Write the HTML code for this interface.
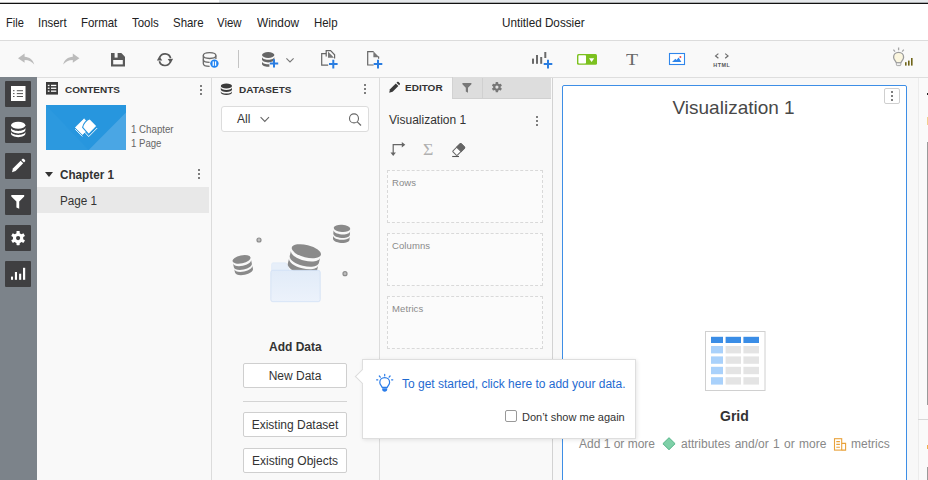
<!DOCTYPE html>
<html lang="en">
<head>
<meta charset="utf-8">
<title>Untitled Dossier</title>
<style>
*{box-sizing:border-box;margin:0;padding:0}
html,body{width:928px;height:480px;overflow:hidden;background:#fff}
body{font-family:"Liberation Sans",Arial,sans-serif;color:#333;position:relative}
.abs{position:absolute}
.t{position:absolute;white-space:nowrap;line-height:1}
svg{position:absolute;overflow:visible}
#topline{left:0;top:0;width:928px;height:4px;background:#fff}
#topline i{position:absolute;left:0;top:3px;width:928px;height:1px;background:#111;box-shadow:0 -1px 0 rgba(0,0,0,.25)}
#topline b{position:absolute;left:219px;top:0;width:709px;height:3px;background:#e5e8eb}
#menubar{left:0;top:4px;width:928px;height:36px;background:#fff}
.menu{font-size:13px;color:#222;top:16px;transform-origin:0 0;transform:scaleX(.88)}
#menuline{left:0;top:40px;width:928px;height:1px;background:#dcdcdc}
#toolbar{left:0;top:41px;width:928px;height:36px;background:#f9f9f9}
#toolline{left:0;top:77px;width:928px;height:1px;background:#dedede}
#sidebar{left:0;top:77px;width:37px;height:403px;background:#7c838a}
.sb{position:absolute;left:5px;width:26px;height:26px;background:#3f3f41;border-radius:1px}
#contents{left:37px;top:78px;width:174px;height:402px;background:#f9f9f9}
#div1{left:211px;top:78px;width:1px;height:402px;background:#dcdcdc}
#datasets{left:212px;top:78px;width:167px;height:402px;background:#f9f9f9}
#div2{left:379px;top:78px;width:1px;height:402px;background:#dcdcdc}
#editor{left:380px;top:78px;width:172px;height:402px;background:#f9f9f9}
#div3{left:552px;top:78px;width:1px;height:402px;background:#d2d2d2}
#canvasbg{left:553px;top:78px;width:375px;height:402px;background:#f8f8f8}
.hdr{font-size:10px;font-weight:bold;color:#333;transform:scaleY(.875);transform-origin:0 8.3px}
.kebab{position:absolute;width:2px;height:2px;background:#555;border-radius:1px;box-shadow:0 4px 0 #555,0 8px 0 #555}
.btn{position:absolute;left:243px;width:104px;height:25px;background:#fff;border:1px solid #cfcfcf;border-radius:2px;font-size:12px;color:#333;text-align:center;line-height:25px}
.drop{position:absolute;left:387px;width:156px;height:53px;border:1px dashed #d9d9d9;background:#fbfbfb}
.drop span{position:absolute;left:4px;top:7px;font-size:9.5px;letter-spacing:.1px;color:#8a8a8a;line-height:1}
</style>
</head>
<body>
<div class="abs" id="menubar"></div>
<div class="abs" id="topline"><b></b><i></i></div>
<span class="t menu" style="left:5.5px;transform:scaleX(.85)">File</span>
<span class="t menu" style="left:37.5px">Insert</span>
<span class="t menu" style="left:81px">Format</span>
<span class="t menu" style="left:132px">Tools</span>
<span class="t menu" style="left:173px">Share</span>
<span class="t menu" style="left:217px">View</span>
<span class="t menu" style="left:256.5px;transform:scaleX(.91)">Window</span>
<span class="t menu" style="left:314px">Help</span>
<span class="t menu" style="left:502px;transform:scaleX(.9)">Untitled Dossier</span>
<div class="abs" id="menuline"></div>
<div class="abs" id="toolbar"></div>
<div class="abs" id="toolline"></div>

<!-- TOOLBAR ICONS -->
<div id="tbicons">
<!-- undo -->
<svg style="left:0;top:0" width="928" height="80" viewBox="0 0 928 80">
<g fill="#bcbcbc">
<path d="M18 58.2 L24.6 53.6 V56.8 C29.5 57 33 59.8 34.2 64.6 C32 61.4 29 60 24.6 59.9 V62.8 Z"/>
<path d="M79.4 58.2 L72.8 53.6 V56.8 C67.9 57 64.4 59.8 63.2 64.6 C65.4 61.4 68.4 60 72.8 59.9 V62.8 Z"/>
</g>
<!-- save -->
<g>
<path d="M111 53 H121.3 L125 56.7 V66.4 H111 Z" fill="#595959"/>
<rect x="113.2" y="60" width="9.6" height="4.4" fill="#f9f9f9"/>
<rect x="114.6" y="53" width="3" height="4.6" fill="#f9f9f9"/>
</g>
<!-- refresh -->
<g fill="none" stroke="#595959" stroke-width="1.7">
<path d="M159.6 57.6 A5.8 5.8 0 0 1 170.6 58.2"/>
<path d="M170.4 61.8 A5.8 5.8 0 0 1 159.4 61.2"/>
</g>
<path d="M156.9 60.6 L159.3 56.2 L162.3 60.4 Z M173.1 58.8 L170.7 63.2 L167.7 59 Z" fill="#595959"/>
<!-- db pause -->
<g fill="none" stroke="#6a6a6a" stroke-width="1.3">
<ellipse cx="209.6" cy="55.6" rx="6.3" ry="2.9"/>
<path d="M203.3 55.6 V63.4 C203.3 65 206 66.3 209.6 66.3 M215.9 55.6 V59"/>
<path d="M203.3 59.4 C203.3 61 206 62.3 209.6 62.3"/>
</g>
<circle cx="214.4" cy="63.6" r="4.2" fill="#1f83f2"/>
<rect x="212.6" y="61.4" width="1.3" height="4.4" fill="#fff"/><rect x="214.9" y="61.4" width="1.3" height="4.4" fill="#fff"/>
<!-- separator -->
<rect x="238" y="50" width="1" height="18" fill="#c4c4c4"/>
<!-- db plus -->
<g fill="#666">
<ellipse cx="268.2" cy="55" rx="6.2" ry="2.9"/>
<path d="M262 57 C262 58.6 264.8 59.8 268.2 59.8 C271.6 59.8 274.4 58.6 274.4 57 V59.6 C274.4 61.2 271.6 62.4 268.2 62.4 C264.8 62.4 262 61.2 262 59.6 Z"/>
<path d="M262 61.4 C262 63 264.8 64.2 268.2 64.2 L269.4 64.15 V66.7 L268.2 66.8 C264.8 66.8 262 65.6 262 64 Z"/>
</g>
<path d="M274 59.2 V67.6 M269.8 63.4 H278.2" stroke="#2a7de1" stroke-width="2" fill="none"/>
<path d="M286.4 58.4 L290 62 L293.6 58.4" stroke="#777" stroke-width="1.1" fill="none"/>
<!-- copy plus -->
<g fill="none" stroke="#666" stroke-width="1.2">
<path d="M326.2 53.6 H321.7 V65.2 H328.2"/>
<path d="M326.2 56.5 V50.7 H330.6 L334.6 54.8 V58.6"/>
</g>
<path d="M328 51.4 L334 57.8 H328 Z" fill="#777"/>
<path d="M333.3 59.8 V68.4 M329 64.1 H337.6" stroke="#2a7de1" stroke-width="2" fill="none"/>
<!-- page plus -->
<path d="M373.6 51.7 H367.7 V65 H373.6 M378.6 56.6 V58.8" fill="none" stroke="#666" stroke-width="1.2"/>
<path d="M373.4 51.2 L379.2 57.2 H373.4 Z" fill="#777"/>
<path d="M378 59.8 V68.4 M373.7 64.1 H382.3" stroke="#2a7de1" stroke-width="2" fill="none"/>
<!-- chart plus -->
<g fill="#6a6a6a">
<rect x="532" y="58.6" width="2" height="5.2"/><rect x="536" y="55" width="2" height="8.8"/><rect x="540.2" y="57" width="2" height="6.8"/><rect x="544.3" y="52" width="2" height="6"/>
</g>
<path d="M548 59.8 V68.4 M543.7 64.1 H552.3" stroke="#2a7de1" stroke-width="2" fill="none"/>
<!-- selector -->
<rect x="577" y="54" width="20" height="10.8" rx="1.5" fill="#7cc11f"/>
<rect x="578.4" y="55.3" width="7.6" height="8.2" rx="0.8" fill="#fff"/>
<path d="M589 58.3 H594.2 L591.6 61.9 Z" fill="#fff"/>
<!-- image -->
<rect x="669.5" y="53.5" width="15" height="11" fill="#fff" stroke="#2f86eb" stroke-width="1.1"/>
<path d="M672 62 L675.4 58.8 L676.6 60 L678.6 57.6 L681.4 62 Z" fill="#2f86eb"/>
<circle cx="680.4" cy="57" r="1" fill="#f0504a"/>
<!-- html -->
<path d="M718.4 53.6 L715.6 55.9 L718.4 58.2 M725.2 53.6 L728 55.9 L725.2 58.2" fill="none" stroke="#6a6a6a" stroke-width="1.2"/>
<text x="721.8" y="66.8" font-family="Liberation Sans, Arial, sans-serif" font-size="5.4" font-weight="bold" fill="#555" text-anchor="middle" letter-spacing="0.5">HTML</text>
<!-- bulb right -->
<g>
<path d="M898.6 47.4 V50.2 M893.4 49.6 L895 51.6 M903.8 49.6 L902.2 51.6" stroke="#a6a6a6" stroke-width="1.3" fill="none"/>
<path d="M898.6 52.4 C895.6 52.4 893.6 54.6 893.6 57.2 C893.6 59.6 895.6 60.8 896.2 62.6 H901 C901.6 60.8 903.6 59.6 903.6 57.2 C903.6 54.6 901.6 52.4 898.6 52.4 Z" fill="#fbf6df" stroke="#9c9c9c" stroke-width="1.3"/>
<rect x="896.4" y="62.8" width="4.4" height="2.8" rx="0.8" fill="#f1f1f1" stroke="#9e9e9e" stroke-width="0.9"/>
<rect x="905" y="62.2" width="1.6" height="3.4" fill="#6f6418"/><rect x="908" y="60.6" width="1.6" height="5" fill="#6f6418"/><rect x="911" y="58" width="1.6" height="7.6" fill="#6f6418"/>
</g>
</svg>
<span class="t" style="left:626px;top:52px;font-family:'Liberation Serif',serif;font-size:16.5px;color:#6a6a6a;transform:scaleX(1.2);transform-origin:0 0">T</span>
</div>

<!-- SIDEBAR -->
<div class="abs" id="sidebar">
  <div class="sb" style="top:4px"></div>
  <div class="sb" style="top:40px"></div>
  <div class="sb" style="top:76px"></div>
  <div class="sb" style="top:112px"></div>
  <div class="sb" style="top:148px"></div>
  <div class="sb" style="top:184px"></div>
</div>
<div id="sbicons">
<svg style="left:0;top:0" width="60" height="300" viewBox="0 0 60 300">
<!-- contents -->
<rect x="11" y="86" width="14.5" height="15" fill="#fff"/>
<g fill="#555">
<rect x="13" y="90.2" width="1.5" height="1"/><rect x="16.8" y="90.2" width="6.2" height="1"/>
<rect x="13" y="93.1" width="1.5" height="1"/><rect x="16.8" y="93.1" width="6.2" height="1"/>
<rect x="13" y="96" width="1.5" height="1"/><rect x="16.8" y="96" width="6.2" height="1"/>
</g>
<!-- db -->
<g fill="#fff">
<ellipse cx="18.2" cy="125.3" rx="7.2" ry="3.5"/>
<path d="M11 127.6 C11 129.6 14.2 131 18.2 131 C22.2 131 25.4 129.6 25.4 127.6 V129.8 C25.4 131.8 22.2 133.4 18.2 133.4 C14.2 133.4 11 131.8 11 129.8 Z"/>
<path d="M11 131.6 C11 133.6 14.2 135 18.2 135 C22.2 135 25.4 133.6 25.4 131.6 V133.6 C25.4 135.6 22.2 137.2 18.2 137.2 C14.2 137.2 11 135.6 11 133.6 Z"/>
</g>
<!-- pencil -->
<g fill="#fff">
<path d="M12 172.2 L12.9 168.4 L20.6 160.7 L23.2 163.3 L15.6 171 Z"/>
<path d="M21.4 159.9 L22.3 159 C22.8 158.5 23.5 158.5 24 159 L24.9 159.9 C25.4 160.4 25.4 161.1 24.9 161.6 L24 162.5 Z"/>
</g>
<!-- funnel -->
<path d="M11.3 195.1 H24.2 V196.6 L19.2 201.6 V208.8 L16.4 207.4 V201.6 L11.3 196.6 Z" fill="#fff"/>
<!-- gear -->
<g transform="translate(18.1 238.1)">
<g fill="#fff">
<circle r="5.2"/>
<rect x="-1.6" y="-7.1" width="3.2" height="14.2" rx="0.6"/>
<rect x="-1.6" y="-7.1" width="3.2" height="14.2" rx="0.6" transform="rotate(60)"/>
<rect x="-1.6" y="-7.1" width="3.2" height="14.2" rx="0.6" transform="rotate(120)"/>
</g>
<circle r="2.1" fill="#3f3f41"/>
</g>
<!-- bars -->
<g fill="#fff">
<rect x="11" y="276.6" width="2" height="3.2"/><rect x="14.9" y="272" width="2.1" height="7.8"/><rect x="19.1" y="273.7" width="2.1" height="6.1"/><rect x="23" y="267.8" width="2.2" height="12"/>
</g>
</svg>
</div>

<!-- CONTENTS PANEL -->
<div class="abs" id="contents"></div>
<svg style="left:46px;top:82px" width="12" height="13" viewBox="0 0 12 13"><rect width="12" height="12.6" fill="#3a3a3a"/>
<g fill="#fff"><rect x="1.8" y="2.8" width="1.7" height="1.3"/><rect x="5" y="2.8" width="5.3" height="1.3"/><rect x="1.8" y="5.6" width="1.7" height="1.3"/><rect x="5" y="5.6" width="5.3" height="1.3"/><rect x="1.8" y="8.5" width="1.7" height="1.3"/><rect x="5" y="8.5" width="5.3" height="1.3"/></g></svg>
<span class="t hdr" style="left:65px;top:85px">CONTENTS</span>
<div class="kebab" style="left:200px;top:85px"></div>
<div class="abs" id="thumb" style="left:46px;top:105px;width:80px;height:45px;background:#2796de;overflow:hidden">
<svg style="left:0;top:0" width="80" height="45" viewBox="0 0 80 45">
<path d="M0 0 L42.7 45 H0 Z" fill="#2c99df"/>
<path d="M42.7 45 L80 7.6 V45 Z" fill="#4aa6e4"/>
<!-- left page -->
<path d="M38.2 13.8 L29.4 22.4 L36.4 29.6 L44 22 Z" fill="#fff" stroke="#fff" stroke-width="0.8" stroke-linejoin="round"/>
<path d="M29.2 24.2 L36.3 31.4" stroke="#fff" stroke-width="0.9" fill="none"/>
<!-- right page -->
<path d="M43.9 13.8 L51 21 L42.7 29.4 L36.6 22.4 C37.6 18.4 40.4 15.2 43.9 13.8 Z" fill="#fff" stroke="#2796de" stroke-width="1.1" stroke-linejoin="round"/>
<path d="M36.2 24.4 L42.7 31.6 L51.2 23" stroke="#fff" stroke-width="0.9" fill="none"/>
</svg></div>
<span class="t" style="left:131px;top:125px;font-size:10px;color:#666;transform-origin:0 0;transform:scaleX(.97)">1 Chapter</span>
<span class="t" style="left:131px;top:139px;font-size:10px;color:#666;transform-origin:0 0;transform:scaleX(.96)">1 Page</span>
<div class="abs" style="left:45px;top:172px;width:0;height:0;border-left:4px solid transparent;border-right:4px solid transparent;border-top:5px solid #333"></div>
<span class="t" style="left:60px;top:169px;font-size:12px;font-weight:bold;color:#333;transform-origin:0 0;transform:scaleX(.975)">Chapter 1</span>
<div class="kebab" style="left:198px;top:169px"></div>
<div class="abs" style="left:37px;top:187px;width:172px;height:26px;background:#e8e8e8"></div>
<span class="t" style="left:60px;top:195px;font-size:12px;color:#333;transform-origin:0 0;transform:scaleX(.975)">Page 1</span>

<!-- DATASETS PANEL -->
<div class="abs" id="div1"></div>
<div class="abs" id="datasets"></div>
<span class="t hdr" style="left:239px;top:85px">DATASETS</span>
<div class="kebab" style="left:364px;top:84px"></div>
<div class="abs" style="left:221px;top:106px;width:148px;height:26px;background:#fff;border:1px solid #dcdcdc;border-radius:3px"></div>
<span class="t" style="left:237px;top:113px;font-size:12px;color:#333">All</span>
<span class="t" style="left:269px;top:341px;font-size:12px;font-weight:bold;color:#333">Add Data</span>
<div class="btn" style="top:363px">New Data</div>
<div class="abs" style="left:243px;top:401px;width:104px;height:1px;background:#d4d4d4"></div>
<div class="btn" style="top:412px">Existing Dataset</div>
<div class="btn" style="top:448px">Existing Objects</div>
<div id="dsart">
<svg style="left:212px;top:78px" width="168" height="260" viewBox="212 78 168 260">
<!-- header db icon -->
<g fill="#3a3a3a">
<ellipse cx="226.4" cy="85.9" rx="5.6" ry="2.5"/>
<path d="M220.8 87.6 C220.8 89 223.3 90 226.4 90 C229.5 90 232 89 232 87.6 V89.6 C232 91 229.5 92.1 226.4 92.1 C223.3 92.1 220.8 91 220.8 89.6 Z"/>
<path d="M220.8 91.2 C220.8 92.6 223.3 93.6 226.4 93.6 C229.5 93.6 232 92.6 232 91.2 V92.6 C232 94 229.5 95 226.4 95 C223.3 95 220.8 94 220.8 92.6 Z"/>
</g>
<!-- chevron + search -->
<path d="M260.6 117.2 L264.8 121.4 L269 117.2" fill="none" stroke="#666" stroke-width="1.1"/>
<circle cx="354" cy="118.4" r="4.5" fill="none" stroke="#666" stroke-width="1.1"/>
<path d="M357.3 121.8 L361 125.5" stroke="#666" stroke-width="1.2"/>
<!-- illustration -->
<circle cx="259" cy="240" r="2" fill="#bdbdbd" stroke="#8c8c8c" stroke-width="1.2"/>
<circle cx="345" cy="273.7" r="2" fill="#bdbdbd" stroke="#8c8c8c" stroke-width="1.2"/>
<!-- top-right db -->
<g transform="translate(341.6 234) rotate(4)">
<g fill="#8a8a8a">
<ellipse cx="0" cy="-5.6" rx="8.3" ry="3.6"/>
<path d="M-8.3 -3.4 C-8.3 -1.2 -4.6 0.4 0 0.4 C4.6 0.4 8.3 -1.2 8.3 -3.4 V0.2 C8.3 2.4 4.6 4 0 4 C-4.6 4 -8.3 2.4 -8.3 0.2 Z"/>
<path d="M-8.3 2 C-8.3 4.2 -4.6 5.8 0 5.8 C4.6 5.8 8.3 4.2 8.3 2 V5.2 C8.3 7.4 4.6 9 0 9 C-4.6 9 -8.3 7.4 -8.3 5.2 Z"/>
</g></g>
<!-- left db -->
<g transform="translate(242.8 265.2) rotate(-12)">
<g fill="#8a8a8a">
<ellipse cx="0" cy="-6" rx="9.2" ry="4"/>
<path d="M-9.2 -3.6 C-9.2 -1.2 -5 0.6 0 0.6 C5 0.6 9.2 -1.2 9.2 -3.6 V0.2 C9.2 2.6 5 4.4 0 4.4 C-5 4.4 -9.2 2.6 -9.2 0.2 Z"/>
<path d="M-9.2 2.2 C-9.2 4.6 -5 6.4 0 6.4 C5 6.4 9.2 4.6 9.2 2.2 V5.6 C9.2 8 5 9.8 0 9.8 C-5 9.8 -9.2 8 -9.2 5.6 Z"/>
</g></g>
<!-- folder back tab -->
<path d="M271.6 264.4 Q271.6 262.8 273.2 262.8 H285 Q286.4 262.8 287 264 L289.2 270.4 H271.6 Z" fill="#e7eff9" stroke="#dbe7f6" stroke-width="0.6"/>
<!-- center db -->
<g transform="translate(304.8 257.4) rotate(14)">
<g fill="#8a8a8a">
<ellipse cx="0" cy="-6.4" rx="15" ry="6.2"/>
<path d="M-15 -3.4 C-15 0.4 -8.2 3.2 0 3.2 C8.2 3.2 15 0.4 15 -3.4 V2 C15 5.8 8.2 8.6 0 8.6 C-8.2 8.6 -15 5.8 -15 2 Z"/>
<path d="M-15 4.6 C-15 8.4 -8.2 11.2 0 11.2 C8.2 11.2 15 8.4 15 4.6 V10 C15 13.8 8.2 16.6 0 16.6 C-8.2 16.6 -15 13.8 -15 10 Z"/>
</g></g>
<!-- folder front -->
<defs><linearGradient id="fg" x1="0" y1="0" x2="0" y2="1"><stop offset="0" stop-color="#e1ebf8"/><stop offset="1" stop-color="#ecf2fb"/></linearGradient></defs><rect x="270.8" y="270.3" width="49.4" height="31.4" rx="2" fill="url(#fg)" stroke="#d0e0f5" stroke-width="0.8"/>
</svg>
</div>

<!-- EDITOR PANEL -->
<div class="abs" id="div2"></div>
<div class="abs" id="editor"></div>
<div class="abs" style="left:452px;top:77px;width:99px;height:22px;background:#dddddd;border-bottom:1px solid #d0d0d0;border-left:1px solid #d2d2d2"></div>
<div class="abs" style="left:482px;top:78px;width:1px;height:20px;background:#d0d0d0"></div>
<span class="t hdr" style="left:405px;top:83px">EDITOR</span>
<span class="t" style="left:389px;top:114px;font-size:12px;color:#333">Visualization 1</span>
<div class="kebab" style="left:536px;top:116px"></div>
<div class="drop" style="top:170px"><span>Rows</span></div>
<div class="drop" style="top:233px"><span>Columns</span></div>
<div class="drop" style="top:296px"><span>Metrics</span></div>
<div id="edicons">
<svg style="left:380px;top:78px" width="175" height="90" viewBox="380 78 175 90">
<!-- pencil -->
<path d="M389.2 92.8 L390 89.2 L395.8 83.4 L398.4 86 L392.6 91.8 Z" fill="#3a3a3a"/>
<path d="M396.5 82.7 L397.2 82 C397.6 81.6 398.2 81.6 398.6 82 L399.8 83.2 C400.2 83.6 400.2 84.2 399.8 84.6 L399.1 85.3 Z" fill="#3a3a3a"/>
<!-- filter -->
<path d="M462.4 83 H471.4 V84.2 L468 87.8 V92.8 L465.8 91.6 V87.8 L462.4 84.2 Z" fill="#777"/>
<!-- gear -->
<g transform="translate(496.9 87.1)">
<g fill="#777"><circle r="3.7"/>
<rect x="-1.25" y="-5.1" width="2.5" height="10.2" rx="0.5"/>
<rect x="-1.25" y="-5.1" width="2.5" height="10.2" rx="0.5" transform="rotate(60)"/>
<rect x="-1.25" y="-5.1" width="2.5" height="10.2" rx="0.5" transform="rotate(120)"/></g>
<circle r="1.6" fill="#e2e2e2"/></g>
<!-- swap -->
<path d="M393.2 153.6 V144.7 H402.6" fill="none" stroke="#666" stroke-width="1.2"/>
<path d="M401.8 141.9 L405.3 144.7 L401.8 147.5 Z M390.5 152.6 L393.2 156.1 L395.9 152.6 Z" fill="#666"/>
<!-- eraser -->
<g transform="translate(458.6 149.6) rotate(-45)">
<rect x="-5.6" y="-3.1" width="11.6" height="6.2" rx="0.8" fill="#fdfdfd" stroke="#666" stroke-width="1"/>
<path d="M0.4 -3.1 H5.2 Q6 -3.1 6 -2.3 V2.3 Q6 3.1 5.2 3.1 H0.4 Z" fill="#666" stroke="#666" stroke-width="1"/>
</g>
<path d="M452.2 156.5 H459" stroke="#555" stroke-width="1.1"/>
</svg>
<span class="t" style="left:423px;top:142px;font-family:'Liberation Serif',serif;font-size:16.5px;color:#b0b0b0;transform-origin:0 0;transform:scaleX(1.08)">Σ</span>
</div>

<!-- CANVAS -->
<div class="abs" id="div3"></div>
<div class="abs" id="canvasbg"></div>
<div class="abs" style="left:918px;top:78px;width:10px;height:402px;background:#fafafa;border-left:1px solid #ececec"></div>
<div class="abs" style="left:918px;top:419px;width:10px;height:1px;background:#d8d8d8"></div>
<div class="abs" style="left:927px;top:142px;width:1px;height:263px;background:#9a9a9a"></div>
<div class="abs" style="left:927px;top:467px;width:1px;height:13px;background:#9a9a9a"></div>
<div class="abs" style="left:927px;top:93px;width:1px;height:2px;background:#222"></div>
<div class="abs" style="left:927px;top:117px;width:1px;height:8px;background:#f3d08f"></div>
<div class="abs" style="left:927px;top:445px;width:1px;height:4px;background:#f2b04a"></div>
<div class="abs" id="viz" style="left:562px;top:85px;width:345px;height:400px;background:#fff;border:1px solid #3d8ee6;border-radius:2px"></div>
<span class="t" style="left:672.5px;top:98px;font-size:19px;color:#484848">Visualization 1</span>
<div class="abs" style="left:884px;top:88px;width:16px;height:16px;background:#fff;border:1px solid #cfcfcf;border-radius:2px"></div>
<div class="kebab" style="left:891px;top:91px"></div>
<div id="gridicon">
<svg style="left:700px;top:325px" width="230" height="135" viewBox="700 325 230 135">
<rect x="705.5" y="331.5" width="59.5" height="59" fill="#fff" stroke="#d0d0d0" stroke-width="1"/>
<g fill="#3a8de6"><rect x="711" y="336.8" width="12" height="6.2"/><rect x="725.6" y="336.8" width="15.4" height="6.2"/><rect x="743.4" y="336.8" width="15.6" height="6.2"/></g>
<g fill="#a9d1fb"><rect x="711" y="346" width="12" height="7.4"/><rect x="711" y="356.4" width="12" height="7.4"/><rect x="711" y="366.8" width="12" height="7.4"/><rect x="711" y="377.2" width="12" height="7.4"/></g>
<g fill="#e4e4e4">
<rect x="725.6" y="346" width="15.4" height="7.4"/><rect x="743.4" y="346" width="15.6" height="7.4"/>
<rect x="725.6" y="356.4" width="15.4" height="7.4"/><rect x="743.4" y="356.4" width="15.6" height="7.4"/>
<rect x="725.6" y="366.8" width="15.4" height="7.4"/><rect x="743.4" y="366.8" width="15.6" height="7.4"/>
<rect x="725.6" y="377.2" width="15.4" height="7.4"/><rect x="743.4" y="377.2" width="15.6" height="7.4"/>
</g>
</svg>
<svg style="left:660px;top:435px" width="190" height="18" viewBox="660 435 190 18">
<path d="M669 437.7 L675.1 443.7 L669 449.7 L662.9 443.7 Z" fill="#7fd0a8" stroke="#52b587" stroke-width="1"/>
<g fill="none" stroke="#e9a23b" stroke-width="1.1">
<rect x="834.5" y="438.7" width="7.2" height="11.4"/>
<path d="M841.7 443.4 H845.6 V450.1 H841.7"/>
<path d="M836.3 441.6 H839.9 M836.3 444.4 H839.9 M836.3 447.2 H839.9"/>
</g>
</svg>
</div>
<span class="t" style="left:720px;top:409px;font-size:14px;font-weight:bold;color:#333">Grid</span>
<span class="t" style="left:579px;top:438px;font-size:12px;color:#888">Add 1 or more</span>
<span class="t" style="left:681px;top:438px;font-size:12px;color:#888;word-spacing:1px">attributes and/or 1 or more</span>
<span class="t" style="left:851px;top:438px;font-size:12px;color:#888">metrics</span>

<!-- TOOLTIP -->
<div class="abs" id="tip" style="left:362px;top:359px;width:274px;height:80px;background:#fff;border:1px solid #dedede;box-shadow:1px 1px 4px rgba(0,0,0,.10)"></div>
<div class="abs" style="left:357px;top:370.5px;width:11px;height:11px;background:#fff;border-left:1px solid #dcdcdc;border-bottom:1px solid #dcdcdc;transform:rotate(45deg)"></div>
<span class="t" style="left:402px;top:378px;font-size:12px;color:#1f6bd1">To get started, click here to add your data.</span>
<div class="abs" style="left:505px;top:410px;width:12px;height:12px;background:#fff;border:1px solid #999;border-radius:2px"></div>
<span class="t" style="left:522px;top:412px;font-size:11px;color:#333">Don’t show me again</span>
<div id="tipicon">
<svg style="left:372px;top:370px" width="26" height="26" viewBox="372 370 26 26">
<g fill="none" stroke="#2b7de9" stroke-width="1.2" stroke-linecap="round">
<path d="M384.7 374.3 V375.8 M379.3 376 L380.3 377.2 M390.1 376 L389.1 377.2 M376.6 379.8 H377.8 M391.6 379.8 H392.8"/>
<path d="M384.7 377.6 C381.8 377.6 379.8 379.8 379.8 382.4 C379.8 384.6 381.4 385.6 382.2 387.4 H387.2 C388 385.6 389.6 384.6 389.6 382.4 C389.6 379.8 387.6 377.6 384.7 377.6 Z"/>
</g>
<path d="M382.2 388.2 H387.2 V389.6 C387.2 390.9 386.2 391.7 384.7 391.7 C383.2 391.7 382.2 390.9 382.2 389.6 Z" fill="#2b7de9"/>
</svg>
</div>
</body>
</html>
